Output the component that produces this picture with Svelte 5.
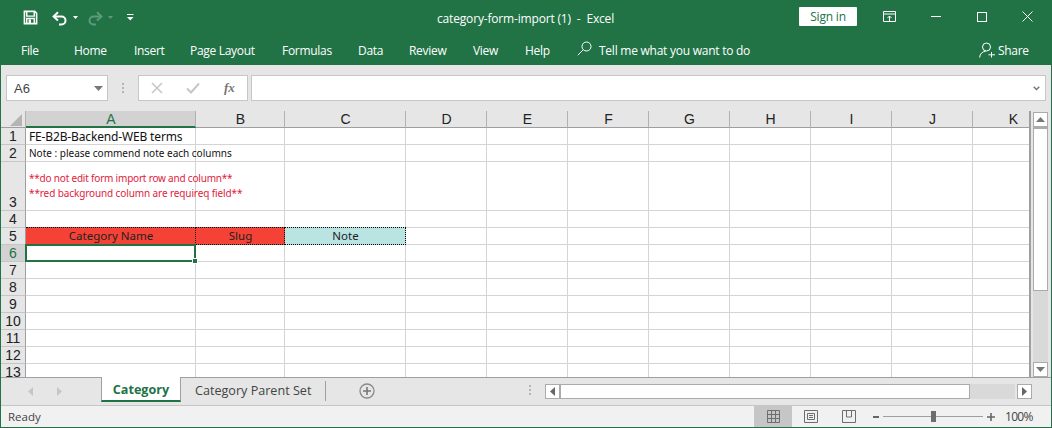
<script>
  const ribbonTabs = ['File', 'Home', 'Insert', 'Page Layout', 'Formulas', 'Data', 'Review', 'View', 'Help'];
  const cols = ['A', 'B', 'C', 'D', 'E', 'F', 'G', 'H', 'I', 'J', 'K'];
  const widths = [170, 89, 121, 81, 81, 81, 81, 81, 81, 81, 81];
  const rowH = [17, 17, 49, 17, 17, 17, 17, 17, 17, 17, 17, 17, 17];
  const gridCols = '25px ' + widths.map((w) => w + 'px').join(' ');
  const gridRows = '17px ' + rowH.map((h) => h + 'px').join(' ');
</script>

<div class="win">
  <header class="top">
    <div class="titlebar">
      <div class="qat">
        <svg class="save" width="15" height="15" viewBox="0 0 16 16"><path d="M1.500 1.500h11l2 2v11h-13z" fill="none" stroke="#fff" stroke-width="1.700"/><path d="M4 2v4.500h8V2" fill="none" stroke="#fff" stroke-width="1.500"/><path d="M4 14V9h8v5" fill="none" stroke="#fff" stroke-width="1.500"/><rect x="6" y="10" width="2.500" height="4" fill="#fff"/></svg>
        <svg class="undo" width="16" height="15" viewBox="0 0 16 15"><path d="M6 1.200 1.600 5.500 6 9.600" fill="none" stroke="#fff" stroke-width="2"/><path d="M2 5.500h7.500a4 4 0 0 1 0 8H7" fill="none" stroke="#fff" stroke-width="2"/></svg>
        <svg class="caret" width="5" height="3" viewBox="0 0 5 3"><path d="M0 0h5L2.500 3z" fill="#fff"/></svg>
        <svg class="redo" width="16" height="15" viewBox="0 0 16 15"><path d="M10 1.200l4.400 4.300L10 9.600" fill="none" stroke="#5d9a79" stroke-width="2"/><path d="M14 5.500H6.500a4 4 0 0 0 0 8H9" fill="none" stroke="#5d9a79" stroke-width="2"/></svg>
        <svg class="caret" width="5" height="3" viewBox="0 0 5 3"><path d="M0 0h5L2.500 3z" fill="#5d9a79"/></svg>
        <svg class="more" width="7" height="7" viewBox="0 0 7 7"><path d="M0 .5h6.500" stroke="#fff"/><path d="M0 3h6.500L3.250 6.500z" fill="#fff"/></svg>
      </div>
      <div class="doc">category-form-import (1)&nbsp; -&nbsp; Excel</div>
      <button class="signin">Sign in</button>
      <svg class="ctl ribbon" width="13" height="11" viewBox="0 0 13 11"><path d="M.5 .5h12v10H.5zM.5 3h12" fill="none" stroke="#fff"/><path d="M6.500 10V5M4.500 7l2-2 2 2" fill="none" stroke="#fff"/></svg>
      <svg class="ctl min" width="10" height="1" viewBox="0 0 10 1"><rect width="10" height="1" fill="#fff"/></svg>
      <svg class="ctl max" width="10" height="10" viewBox="0 0 10 10"><rect x=".5" y=".5" width="9" height="9" fill="none" stroke="#fff"/></svg>
      <svg class="ctl close" width="11" height="11" viewBox="0 0 11 11"><path d="M.5 .5l10 10M10.500 .5l-10 10" stroke="#fff"/></svg>
    </div>
    <nav class="tabs">
      {#each ribbonTabs as t, i}
        <span class="tab tab{i}">{t}</span>
      {/each}
      <svg class="search" width="15" height="15" viewBox="0 0 15 15"><circle cx="9.500" cy="5.500" r="4.500" fill="none" stroke="#fff"/><path d="M6.200 8.800.8 14.200" stroke="#fff"/></svg>
      <span class="tell">Tell me what you want to do</span>
      <span class="share">
        <svg width="17" height="16" viewBox="0 0 17 16"><circle cx="7.500" cy="5" r="4" fill="none" stroke="#fff"/><path d="M.6 15.500c.4-3.600 2.600-6 6-6.200M12.500 10v5.500M9.500 12.800h6.500" fill="none" stroke="#fff"/></svg>
        Share
      </span>
    </nav>
  </header>

  <section class="fbar">
    <div class="namebox"><span>A6</span><svg width="9" height="5" viewBox="0 0 9 5"><path d="M0 0h9L4.500 5z" fill="#777"/></svg></div>
    <div class="grip"><i></i><i></i><i></i></div>
    <div class="fbtns">
      <svg width="12" height="12" viewBox="0 0 12 12"><path d="M1 1l10 10M11 1 1 11" stroke="#c6c6c6" stroke-width="1.500"/></svg>
      <svg width="14" height="12" viewBox="0 0 14 12"><path d="M1 6.500 5 10.500 13 1.500" fill="none" stroke="#c6c6c6" stroke-width="2"/></svg>
      <span class="fx">fx</span>
    </div>
    <div class="finput"><svg width="7" height="5" viewBox="0 0 7 5"><path d="M.7 .7 3.500 3.500 6.300 .7" fill="none" stroke="#777" stroke-width="1.500"/></svg></div>
  </section>

  <section class="body">
    <div class="sheet" style="grid-template-columns:{gridCols};grid-template-rows:{gridRows}">
      <div class="corner"><svg width="12" height="12" viewBox="0 0 12 12"><path d="M12 0v12H0z" fill="#b4b4b4"/></svg></div>
      {#each cols as c, i}
        <div class="ch" class:sel={i === 0}>{c}</div>
      {/each}
      {#each rowH as h, r}
        <div class="rh" class:sel={r === 5}>{r + 1}</div>
        {#each cols as c, i}
          <div
            class="cell"
            class:red={r === 4 && i < 2}
            class:teal={r === 4 && i === 2}
            class:dot={r === 4 && i < 3}
          >
            {#if r === 0 && i === 0}<span class="c-title">FE-B2B-Backend-WEB terms</span>{/if}
            {#if r === 1 && i === 0}<span class="c-note">Note : please commend note each columns</span>{/if}
            {#if r === 2 && i === 0}<div class="c-warn"><span class="w1">**do not edit form import row and column**</span><span class="w2">**red background column are requireq field**</span></div>{/if}
            {#if r === 4 && i === 0}<span class="hd">Category Name</span>{/if}
            {#if r === 4 && i === 1}<span class="hd">Slug</span>{/if}
            {#if r === 4 && i === 2}<span class="hd">Note</span>{/if}
            {#if r === 5 && i === 0}<div class="cursor"><b></b></div>{/if}
          </div>
        {/each}
      {/each}
    </div>
    <div class="vscroll">
      <div class="sbtn"><svg width="9" height="5" viewBox="0 0 9 5"><path d="M0 5h9L4.500 0z" fill="#777"/></svg></div>
      <div class="vthumb"></div>
      <div class="vtrack"></div>
      <div class="sbtn"><svg width="9" height="5" viewBox="0 0 9 5"><path d="M0 0h9L4.500 5z" fill="#777"/></svg></div>
    </div>
  </section>

  <section class="sheets">
    <div class="nav">
      <svg width="5" height="9" viewBox="0 0 5 9"><path d="M5 0v9L0 4.500z" fill="#c6c6c6"/></svg>
      <svg width="5" height="9" viewBox="0 0 5 9"><path d="M0 0v9l5-4.500z" fill="#c6c6c6"/></svg>
    </div>
    <div class="stab on">Category</div>
    <div class="stab">Category Parent Set</div>
    <div class="sep"></div>
    <svg class="add" width="16" height="16" viewBox="0 0 16 16"><circle cx="8" cy="8" r="7" fill="none" stroke="#8a8a8a" stroke-width="1.300"/><path d="M8 4v8M4 8h8" stroke="#777" stroke-width="1.600"/></svg>
    <div class="hgrip"><i></i><i></i><i></i></div>
    <div class="hscroll">
      <div class="hbtn"><svg width="5" height="9" viewBox="0 0 5 9"><path d="M5 0v9L0 4.500z" fill="#666"/></svg></div>
      <div class="hthumb"></div>
      <div class="htrack"></div>
      <div class="hbtn r"><svg width="5" height="9" viewBox="0 0 5 9"><path d="M0 0v9l5-4.500z" fill="#666"/></svg></div>
    </div>
  </section>

  <footer class="status">
    <span class="ready">Ready</span>
    <div class="vb on">
      <svg width="13" height="13" viewBox="0 0 13 13"><path d="M.5 .5h12v12H.5zM.5 4.500h12M.5 8.500h12M4.500 .5v12M8.500 .5v12" fill="none" stroke="#6e6e6e"/></svg>
    </div>
    <div class="vb">
      <svg width="14" height="13" viewBox="0 0 14 13"><path d="M.5 .5h13v12H.5z" fill="none" stroke="#6e6e6e"/><path d="M3.500 3.500h7v6h-7zM5 5.500h4M5 7.500h4" fill="none" stroke="#6e6e6e"/></svg>
    </div>
    <div class="vb">
      <svg width="14" height="13" viewBox="0 0 14 13"><path d="M.5 .5h13v12H.5zM4.500 .5v6.500h5V.5" fill="none" stroke="#6e6e6e"/></svg>
    </div>
    <div class="zoom">
      <i class="minus"></i>
      <div class="slider"><i class="knob"></i></div>
      <svg width="8" height="8" viewBox="0 0 8 8"><path d="M4 0v8M0 4h8" stroke="#666" stroke-width="1.600"/></svg>
    </div>
    <span class="pct">100%</span>
  </footer>
</div>

<style>
  :global(body) { margin: 0; background: #e6e6e6; }
  .win {
    width: 1052px; height: 428px; box-sizing: border-box; overflow: hidden;
    border-left: 1px solid #217346; border-right: 1px solid #217346; border-bottom: 1px solid #217346;
    display: flex; flex-direction: column; background: #e6e6e6;
    font-family: "Open Sans", "Noto Sans", sans-serif; color: #444;
  }
  .top { height: 65px; background: #217346; color: #fff; margin: 0 -1px; flex: none; }
  .titlebar { height: 33px; display: flex; align-items: center; position: relative; }
  .qat { display: flex; align-items: center; padding-left: 23px; margin-top: 2px; }
  .undo { margin-left: 14px; margin-top: 1px; }
  .caret { margin-left: 5px; }
  .redo { margin-left: 9px; margin-top: 1px; }
  .more { margin-left: 14px; }
  .doc { position: absolute; left: 437px; top: 10px; font-size: 12px; line-height: 17px; white-space: nowrap; letter-spacing: -0.17px; }
  .signin {
    margin-left: auto; width: 58px; height: 19px; border: 0; padding: 0; background: #fff; border-radius: 1px;
    color: #217346; font: 12px/19px "Open Sans", sans-serif; letter-spacing: -0.2px; margin-right: 26px;
  }
  .ctl { flex: none; }
  .ribbon { margin-right: 35px; }
  .min { margin-right: 36px; }
  .max { margin-right: 35px; }
  .close { margin-right: 19px; }
  .tabs { height: 32px; position: relative; font-size: 12px; letter-spacing: -0.3px; }
  .tab { position: absolute; top: 9px; line-height: 17px; white-space: nowrap; }
  .tab0 { left: 21px; } .tab1 { left: 74px; } .tab2 { left: 134px; } .tab3 { left: 190px; } .tab4 { left: 282px; }
  .tab5 { left: 358px; } .tab6 { left: 409px; } .tab7 { left: 473px; } .tab8 { left: 525px; }
  .search { position: absolute; left: 577px; top: 8px; }
  .tell { position: absolute; left: 599px; top: 9px; line-height: 17px; white-space: nowrap; letter-spacing: -0.25px; }
  .share { position: absolute; left: 979px; top: 9px; line-height: 17px; display: flex; gap: 2px; }

  .fbar { height: 45px; flex: none; display: flex; align-items: flex-start; padding-top: 10px; padding-left: 5px; box-sizing: border-box; }
  .namebox, .fbtns, .finput { height: 26px; box-sizing: border-box; border: 1px solid #c6c6c6; background: #fff; flex: none; display: flex; align-items: center; }
  .namebox { width: 102px; padding: 0 4px 0 7px; justify-content: space-between; font: 13px "Liberation Sans", sans-serif; color: #444; }
  .grip { width: 30px; display: flex; flex-direction: column; align-items: center; gap: 2px; padding-top: 8px; }
  .grip i, .hgrip i { display: block; width: 2px; height: 2px; background: #b4b4b4; }
  .fbtns { width: 110px; padding-left: 12px; }
  .fbtns svg + svg { margin-left: 23px; }
  .fx { margin-left: 24px; font: italic bold 13px "Liberation Serif", serif; color: #777; }
  .finput { width: 795px; margin-left: 3px; justify-content: flex-end; padding-right: 5px; }

  .body { height: 267px; flex: none; display: flex; position: relative; padding-top: 1px; box-sizing: border-box; }
  .sheet { display: grid; width: 1031px; height: 266px; margin-left: -1px; padding-left: 1px; overflow: hidden; box-sizing: border-box; flex: none; border-right: 2px solid #9f9f9f; background: #fff; position: relative; }
  .corner { background: #e6e6e6; border-right: 1px solid #b1b1b1; border-bottom: 1px solid #9f9f9f; display: flex; align-items: flex-end; justify-content: flex-end; padding: 0 3px 1px 0; box-sizing: border-box; }
  .ch, .rh { background: #e6e6e6; font: 14px "Liberation Sans", sans-serif; color: #222; display: flex; align-items: center; justify-content: center; box-sizing: border-box; }
  .ch { border-right: 1px solid #b1b1b1; border-bottom: 1px solid #9f9f9f; padding-left: 1px; }
  .ch.sel { background: #d2d2d2; color: #217346; border-bottom: 2px solid #217346; }
  .rh { border-right: 1px solid #9f9f9f; border-bottom: 1px solid #c6c6c6; align-items: flex-end; line-height: 15px; }
  .rh.sel { background: #d2d2d2; color: #217346; border-right: 1px solid #217346; }
  .cell { border-right: 1px solid #d4d4d4; border-bottom: 1px solid #d4d4d4; box-sizing: border-box; position: relative; white-space: nowrap; min-width: 0; }
  .red { background: #f44336; }
  .teal { background: #b9e4e2; }
  .dot { border-top: 1px dotted #000; border-right: 1px dotted #000; border-bottom: 1px dotted #000; margin-top: -1px; }
  .c-title { font: 12px/17px "Noto Sans", sans-serif; color: #111; margin-left: 3px; display: block; letter-spacing: -0.15px; }
  .c-note { font: 10px/17px "Noto Sans", sans-serif; color: #111; margin-left: 3px; display: block; }
  .c-warn { font: 10px/15px "Noto Sans", sans-serif; color: #e01b3c; margin-left: 3px; margin-top: 9px; }
  .w1, .w2 { display: block; }
  .w1 { letter-spacing: -0.2px; }
  .w2 { letter-spacing: -0.11px; }
  .hd { display: block; text-align: center; font: 11.500px/16px "Noto Sans", sans-serif; color: #222; padding-left: 1px; }
  .cursor { position: absolute; left: -1px; top: -1px; right: -1px; bottom: -1px; border: 2px solid #217346; box-sizing: border-box; z-index: 2; }
  .cursor b { position: absolute; right: -4px; bottom: -4px; width: 6px; height: 6px; background: #217346; border: 1px solid #fff; box-sizing: border-box; }

  .vscroll { width: 15px; margin-left: 2px; margin-top: 1px; height: 265px; display: flex; flex-direction: column; flex: none; background: #d9d9d9; }
  .sbtn { height: 15px; box-sizing: border-box; border: 1px solid #ababab; background: #fff; display: flex; align-items: center; justify-content: center; flex: none; }
  .vthumb { height: 164px; box-sizing: border-box; border: 1px solid #ababab; border-top-width: 2px; background: #fff; flex: none; }
  .vtrack { flex: 1; }

  .sheets { height: 28px; flex: none; display: flex; align-items: flex-start; position: relative; border-top: 1px solid #9f9f9f; box-sizing: border-box; }
  .nav { width: 100px; display: flex; gap: 24px; padding: 9px 0 0 27px; box-sizing: border-box; flex: none; }
  .stab { height: 24px; padding: 0 14px; font: 12.600px/26px "Open Sans", sans-serif; color: #444; white-space: nowrap; box-sizing: border-box; }
  .stab.on { width: 80px; padding: 0; text-align: center; background: #fff; color: #217346; font-weight: 700; margin-top: -1px; height: 25px; border-left: 1px solid #9f9f9f; border-right: 1px solid #9f9f9f; border-bottom: 2px solid #217346; }
  .sep { width: 1px; height: 20px; background: #9f9f9f; margin-top: 3px; }
  .add { margin: 5px 0 0 33px; flex: none; }
  .hgrip { position: absolute; left: 528px; top: 7px; display: flex; flex-direction: column; gap: 2px; }
  .hscroll { position: absolute; left: 544px; top: 6px; width: 487px; height: 15px; display: flex; background: #d9d9d9; }
  .hbtn { width: 15px; box-sizing: border-box; border: 1px solid #ababab; background: #fff; display: flex; align-items: center; justify-content: center; flex: none; }
  .hthumb { width: 410px; box-sizing: border-box; border: 1px solid #ababab; background: #fff; flex: none; }
  .htrack { flex: 1; }
  .hbtn.r { margin-left: 2px; box-shadow: -2px 0 0 #e6e6e6; }

  .status { height: 22px; flex: none; background: #f1f1f1; border-top: 1px solid #c6c6c6; box-sizing: border-box; display: flex; align-items: center; position: relative; font-size: 12px; }
  .ready { position: absolute; left: 7px; top: 2px; line-height: 17px; color: #444; font-size: 11.500px; }
  .vb { width: 38px; height: 21px; display: flex; align-items: center; justify-content: center; flex: none; }
  .vb.on { background: #c6c6c6; margin-left: 753px; }
  .zoom { display: flex; align-items: center; margin-left: 5px; }
  .minus { display: block; width: 6px; height: 2px; background: #666; }
  .slider { width: 100px; height: 1px; background: #a0a0a0; margin: 0 4px; position: relative; }
  .knob { position: absolute; left: 48px; top: -5px; width: 5px; height: 11px; background: #6e6e6e; }
  .pct { margin-left: 10px; font: 12px "Open Sans", sans-serif; letter-spacing: -0.7px; color: #444; }
</style>
